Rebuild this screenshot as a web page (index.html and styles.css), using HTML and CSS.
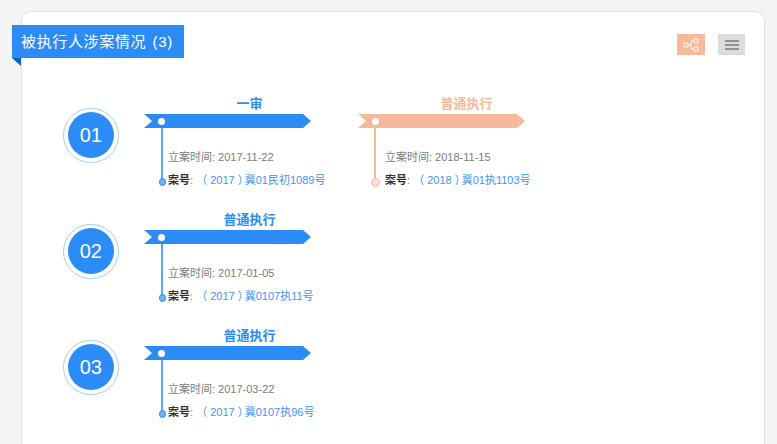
FILE: index.html
```html
<!DOCTYPE html>
<html lang="zh">
<head>
<meta charset="utf-8">
<title>被执行人涉案情况</title>
<link rel="stylesheet" href="styles.css">
</head>
<body>
<main class="card">
  <h1 class="tag">被执行人涉案情况 (3)</h1>
  <div class="tools">
    <button class="tool tool-tree" aria-label="树状视图">
      <svg width="16" height="14" viewBox="0 0 16 14" fill="none" stroke="#fff" stroke-opacity=".85" stroke-width="1.2">
        <rect x="1" y="5" width="4" height="4" rx="1"/>
        <rect x="11" y="1" width="4" height="4" rx="1"/>
        <rect x="11" y="9" width="4" height="4" rx="1"/>
        <path d="M5 7H8M11 3H9.2Q8 3 8 4.2V9.8Q8 11 9.2 11H11"/>
      </svg>
    </button>
    <button class="tool tool-list" aria-label="列表视图">
      <span class="bar"></span><span class="bar"></span><span class="bar"></span>
    </button>
  </div>

  <section class="row">
    <div class="badge"><span class="num">01</span></div>
    <div class="items">
      <article class="item">
        <h2 class="item-title">一审</h2>
        <div class="ribbon"></div>
        <div class="body">
          <p class="line">立案时间: 2017-11-22</p>
          <p class="line"><b class="label">案号</b>: <a class="case">（ 2017 <span class="close">）</span>冀01民初1089号</a></p>
        </div>
      </article>
      <article class="item orange">
        <h2 class="item-title">普通执行</h2>
        <div class="ribbon"></div>
        <div class="body">
          <p class="line">立案时间: 2018-11-15</p>
          <p class="line"><b class="label">案号</b>: <a class="case">（ 2018 <span class="close">）</span>冀01执1103号</a></p>
        </div>
      </article>
    </div>
  </section>

  <section class="row">
    <div class="badge"><span class="num">02</span></div>
    <div class="items">
      <article class="item">
        <h2 class="item-title">普通执行</h2>
        <div class="ribbon"></div>
        <div class="body">
          <p class="line">立案时间: 2017-01-05</p>
          <p class="line"><b class="label">案号</b>: <a class="case">（ 2017 <span class="close">）</span>冀0107执11号</a></p>
        </div>
      </article>
    </div>
  </section>

  <section class="row">
    <div class="badge"><span class="num">03</span></div>
    <div class="items">
      <article class="item">
        <h2 class="item-title">普通执行</h2>
        <div class="ribbon"></div>
        <div class="body">
          <p class="line">立案时间: 2017-03-22</p>
          <p class="line"><b class="label">案号</b>: <a class="case">（ 2017 <span class="close">）</span>冀0107执96号</a></p>
        </div>
      </article>
    </div>
  </section>
</main>
</body>
</html>
```

FILE: styles.css
```css
* { box-sizing: border-box; }
html, body { margin: 0; height: 444px; overflow: hidden; }
body {
  background: #f4f4f4;
  font-family: "Liberation Sans", "Noto Sans CJK SC", sans-serif;
  padding: 11px 12px 0 21px;
}
.card {
  position: relative;
  height: 433px;
  background: #fff;
  border: 1px solid #e2e2e2;
  border-bottom: 0;
  border-radius: 10px 10px 0 0;
  padding: 83px 0 0 41px;
}
.tag {
  position: absolute;
  left: -10px;
  top: 13px;
  width: 172px;
  height: 33px;
  margin: 0;
  padding-left: 9px;
  background: #2b8cf7;
  color: #fff;
  font-size: 15px;
  font-weight: 400;
  line-height: 33px;
  letter-spacing: 0.65px;
  word-spacing: 1.5px;
  white-space: nowrap;
}
.tag::after {
  content: "";
  position: absolute;
  left: 0;
  top: 33px;
  width: 9px;
  height: 8px;
  background: #0f62c4;
  clip-path: polygon(0 0, 100% 0, 100% 100%);
}
.tools {
  position: absolute;
  right: 19px;
  top: 22px;
  display: flex;
  gap: 13px;
}
.tool {
  height: 21px;
  padding: 0;
  border: 0;
  display: flex;
  flex-direction: column;
  align-items: center;
  justify-content: center;
}
.tool-tree { width: 28px; background: #f6b999; }
.tool-list { width: 27px; background: #dcdcdc; gap: 2px; }
.bar { width: 14px; height: 2px; background: #929292; }
.row {
  display: flex;
  height: 116px;
}
.badge {
  width: 55.5px;
  height: 55.5px;
  margin: 12.5px 0 0 0;
  border: 1.5px solid #a3cdfb;
  border-radius: 50%;
  display: flex;
  align-items: center;
  justify-content: center;
  flex: none;
}
.num {
  width: 46px;
  height: 46px;
  border-radius: 50%;
  background: #2b8cf7;
  color: #fff;
  font-size: 20px;
  line-height: 46px;
  text-align: center;
}
.items {
  display: flex;
  gap: 47px;
  margin-left: 25.5px;
}
.item {
  --accent: #2b8cf7;
  width: 167px;
  color: var(--accent);
}
.item.orange { --accent: #f6b999; }
.item-title {
  margin: 0 0 1px;
  padding-left: 44px;
  height: 18px;
  font-size: 13px;
  font-weight: 700;
  line-height: 18px;
  text-align: center;
  white-space: nowrap;
}
.orange .item-title { padding-left: 50px; }
.ribbon {
  position: relative;
  height: 14px;
  background: var(--accent);
  clip-path: polygon(0 0, calc(100% - 8px) 0, 100% 50%, calc(100% - 8px) 100%, 0 100%, 8px 50%);
}
.ribbon::after {
  content: "";
  position: absolute;
  left: 14px;
  top: 3.5px;
  width: 7px;
  height: 7px;
  border-radius: 50%;
  background: #fff;
}
.body {
  position: relative;
  margin-left: 17px;
  height: 53px;
  padding: 20.5px 0 0 7px;
}
.orange .body { margin-left: 16px; padding-left: 11px; }
.body::before {
  content: "";
  position: absolute;
  left: -0.5px;
  top: 0;
  width: 2px;
  height: 53px;
  background: #5ca6f8;
}
.orange .body::before { background: var(--accent); left: 0; width: 1.5px; }
.body::after {
  content: "";
  position: absolute;
  left: -2.5px;
  top: 50px;
  width: 5.5px;
  height: 5.5px;
  border: 1.5px solid var(--accent);
  border-radius: 50%;
  background: #6fb0f9;
}
.orange .body::after { background: #fbe3d6; left: -3px; width: 7px; height: 7px; }
.line {
  margin: 0 0 7.5px;
  height: 16px;
  color: #7c7c7c;
  font-size: 11px;
  line-height: 16px;
  white-space: nowrap;
}
.label { color: #333; font-weight: 700; }
.case { color: #3f94f5; }
.close { font-feature-settings: "halt"; margin-right: 1.5px; }
```
